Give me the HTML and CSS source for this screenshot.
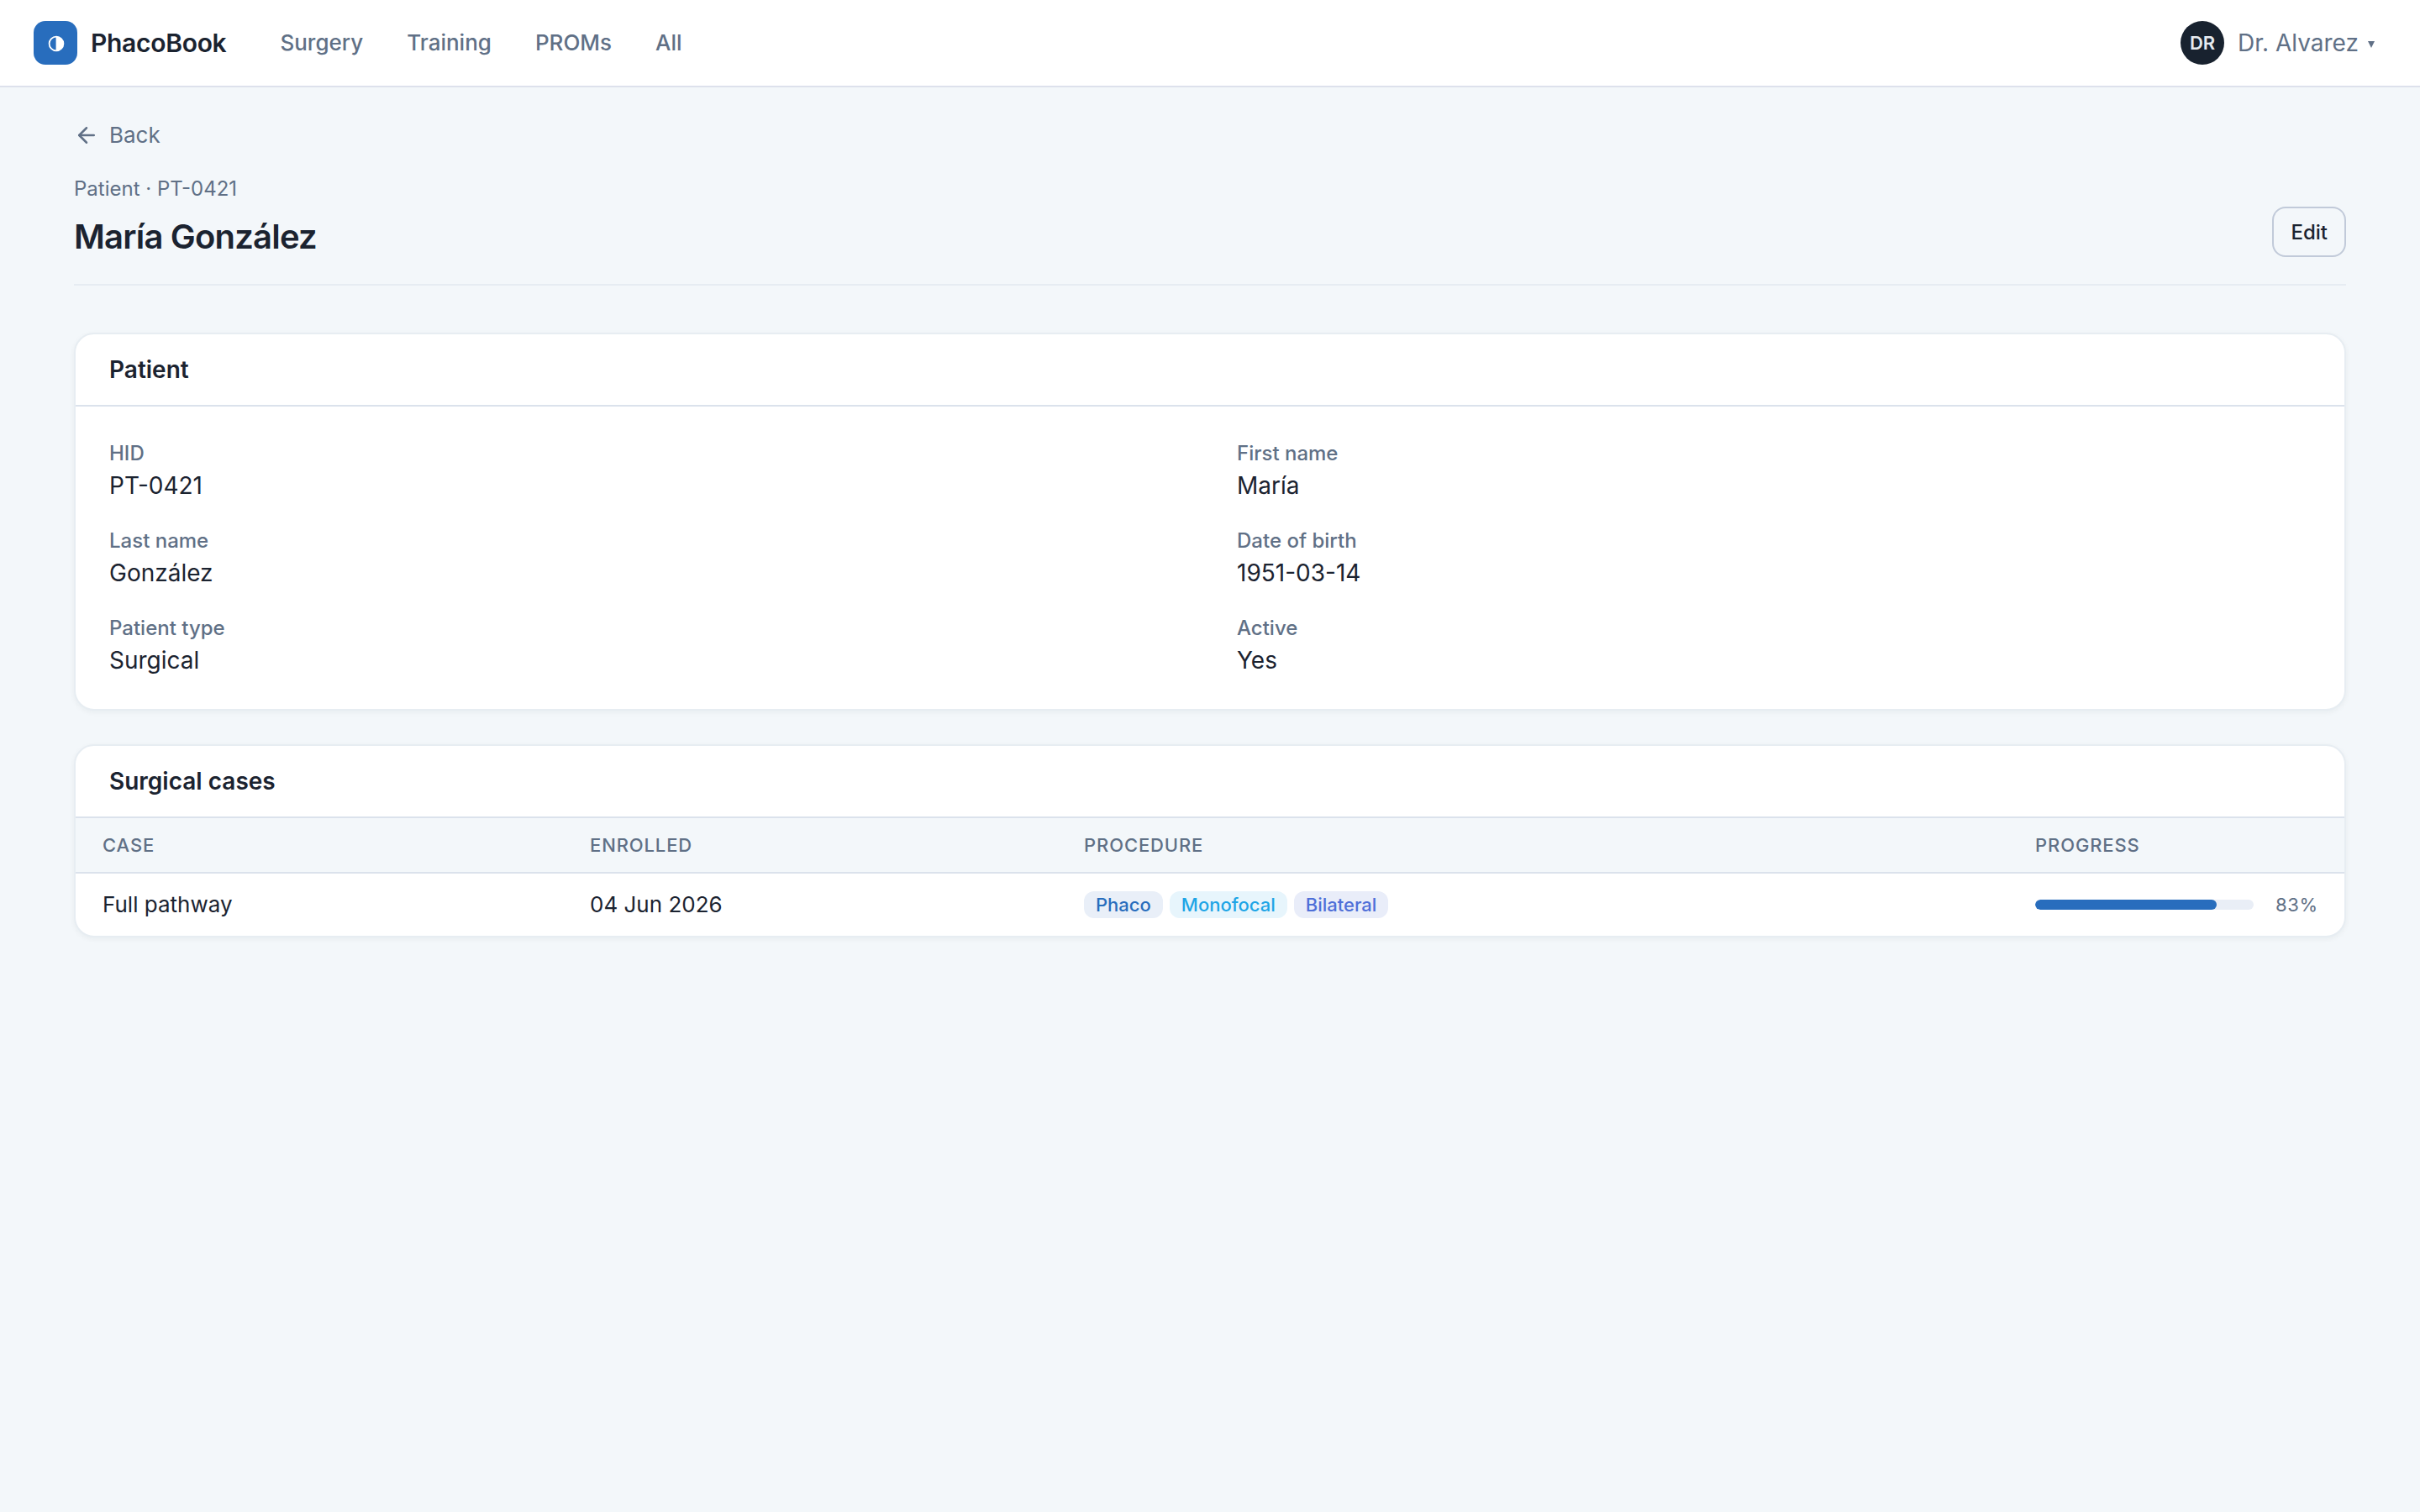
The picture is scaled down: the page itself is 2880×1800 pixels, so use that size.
FILE: index.html
```html
<!DOCTYPE html>
<html lang="en">
<head>
  <meta charset="UTF-8" />
  <title>PhacoBook - María González</title>
  <meta name="viewport" content="width=device-width, initial-scale=1.0" />
  <link rel="stylesheet" href="styles.css">
</head>
<body>
  <header class="topbar">
    <a class="brand" href="#">
      <span class="brand-mark">
        <svg viewBox="0 0 20 20" width="20" height="20">
          <circle cx="10" cy="10" r="8.4" fill="none" stroke="#fff" stroke-width="1.8" />
          <path d="M9.6 1.6H10a8.4 8.4 0 0 1 0 16.8h-.4z" fill="#fff" />
        </svg>
      </span>
      <span class="brand-name">PhacoBook</span>
    </a>
    <nav class="nav">
      <a href="#">Surgery</a>
      <a href="#">Training</a>
      <a href="#">PROMs</a>
      <a href="#">All</a>
    </nav>
    <div class="user">
      <span class="avatar">DR</span>
      <span class="user-name">Dr. Alvarez</span>
      <svg class="caret" viewBox="0 0 8 8" width="8" height="8"><path d="M0 0h8L4 8z" fill="currentColor" /></svg>
    </div>
  </header>

  <main class="page">
    <a class="back" href="#">
      <svg viewBox="0 0 24 24" width="30" height="30" fill="none" stroke="currentColor" stroke-width="2" stroke-linecap="round" stroke-linejoin="round">
        <path d="M19 12H5" />
        <path d="M12 19l-7-7 7-7" />
      </svg>
      <span>Back</span>
    </a>

    <div class="page-head">
      <div>
        <p class="eyebrow">Patient · PT-0421</p>
        <h1>María González</h1>
      </div>
      <button class="btn">Edit</button>
    </div>

    <section class="card">
      <h2>Patient</h2>
      <dl class="details">
        <div><dt>HID</dt><dd>PT-0421</dd></div>
        <div><dt>First name</dt><dd>María</dd></div>
        <div><dt>Last name</dt><dd>González</dd></div>
        <div><dt>Date of birth</dt><dd>1951-03-14</dd></div>
        <div><dt>Patient type</dt><dd>Surgical</dd></div>
        <div><dt>Active</dt><dd>Yes</dd></div>
      </dl>
    </section>

    <section class="card">
      <h2>Surgical cases</h2>
      <table class="cases">
        <thead>
          <tr>
            <th class="col-case">Case</th>
            <th class="col-enrolled">Enrolled</th>
            <th>Procedure</th>
            <th class="col-progress">Progress</th>
          </tr>
        </thead>
        <tbody>
          <tr>
            <td>Full pathway</td>
            <td>04 Jun 2026</td>
            <td>
              <div class="tags">
                <span class="tag tag-phaco">Phaco</span>
                <span class="tag tag-mono">Monofocal</span>
                <span class="tag tag-bilateral">Bilateral</span>
              </div>
            </td>
            <td>
              <div class="progress">
                <div class="track"><div class="fill" style="width: 83%"></div></div>
                <span class="percent">83%</span>
              </div>
            </td>
          </tr>
        </tbody>
      </table>
    </section>
  </main>
</body>
</html>
```
FILE: styles.css
```css
* {
  box-sizing: border-box;
}
body {
  margin: 0;
  font-family: Inter, "Liberation Sans", sans-serif;
  font-size: 28px;
  color: #1b2330;
  background: #f3f7fa;
}
a {
  color: inherit;
  text-decoration: none;
}
h1, h2, p, dl, dd {
  margin: 0;
}

/* Top bar */
.topbar {
  display: flex;
  align-items: center;
  height: 104px;
  padding: 0 54px 0 40px;
  background: #fff;
  border-bottom: 2px solid #dde1ec;
}
.brand {
  display: flex;
  align-items: center;
  gap: 16px;
}
.brand-mark {
  display: flex;
  align-items: center;
  justify-content: center;
  width: 52px;
  height: 52px;
  padding: 2px 0 0 1px;
  border-radius: 14px;
  background: #286dbd;
}
.brand-name {
  font-size: 30px;
  font-weight: 600;
  letter-spacing: -0.01em;
}
.nav {
  display: flex;
  gap: 52px;
  margin-left: 64px;
  padding-bottom: 1px;
  font-size: 26px;
  font-weight: 500;
  line-height: 32px;
  color: #607086;
}
.user {
  display: flex;
  align-items: center;
  margin-left: auto;
  color: #607086;
}
.avatar {
  display: flex;
  align-items: center;
  justify-content: center;
  width: 52px;
  height: 52px;
  margin-right: 16px;
  border-radius: 50%;
  background: #18222f;
  color: #e6ebf0;
  font-size: 22px;
  font-weight: 600;
}
.caret {
  margin: 4px 0 0 11px;
}

/* Page head */
.page {
  padding: 40px 88px;
}
.back {
  display: flex;
  align-items: center;
  gap: 12px;
  height: 34px;
  font-size: 26px;
  line-height: 32px;
  color: #607086;
}
.page-head {
  display: flex;
  align-items: flex-end;
  justify-content: space-between;
  height: 162px;
  margin-bottom: 56px;
  padding-bottom: 32px;
  border-bottom: 2px solid #e6ecf2;
}
.eyebrow {
  margin-bottom: 15px;
  font-size: 24px;
  line-height: 36px;
  color: #607086;
}
h1 {
  font-size: 40px;
  font-weight: 600;
  line-height: 48px;
  letter-spacing: -0.02em;
}
.btn {
  height: 60px;
  padding: 0 20px;
  border: 2px solid #c1cad9;
  border-radius: 16px;
  background: transparent;
  color: #1b2330;
  font: 500 24px Inter, "Liberation Sans", sans-serif;
}

/* Cards */
.card {
  margin-bottom: 40px;
  border: 2px solid #e7edf2;
  border-radius: 24px;
  background: #fff;
  box-shadow: 0 2px 6px rgba(24, 34, 47, 0.05);
  overflow: hidden;
}
.card h2 {
  height: 86px;
  padding: 0 40px;
  border-bottom: 2px solid #dbe2ec;
  font-size: 28px;
  font-weight: 600;
  line-height: 84px;
}
.details {
  display: grid;
  grid-template-columns: 1fr 1fr;
  gap: 28px 64px;
  padding: 38px 40px 38px;
}
dt {
  font-size: 24px;
  font-weight: 500;
  line-height: 36px;
  color: #607086;
}
dd {
  line-height: 40px;
}

/* Cases table */
.cases {
  width: 100%;
  table-layout: fixed;
  border-collapse: separate;
  border-spacing: 0;
}
.col-case {
  width: 580px;
}
.col-enrolled {
  width: 588px;
}
.col-progress {
  width: 400px;
}
th {
  height: 66px;
  padding: 0 32px;
  border-bottom: 2px solid #dbe2ec;
  background: #f3f7fa;
  font-size: 22px;
  font-weight: 500;
  letter-spacing: 0.04em;
  text-align: left;
  text-transform: uppercase;
  color: #607086;
}
td {
  height: 74px;
  padding: 0 32px;
  font-size: 26px;
  line-height: 32px;
}
.tags {
  display: flex;
  gap: 8px;
}
.tag {
  height: 32px;
  padding: 0 14px;
  border-radius: 12px;
  font-size: 22px;
  font-weight: 500;
  line-height: 32px;
}
.tag-phaco {
  background: #e9eff8;
  color: #286dbd;
}
.tag-mono {
  background: #e7f5fc;
  color: #1ea5e6;
}
.tag-bilateral {
  background: #e9edf9;
  color: #4f6fd8;
}
.progress {
  display: flex;
  align-items: center;
  justify-content: space-between;
}
.track {
  width: 260px;
  height: 12px;
  border-radius: 6px;
  background: #e9eef6;
  overflow: hidden;
}
.fill {
  height: 100%;
  border-radius: 6px;
  background: #286dbd;
}
.percent {
  font-size: 22px;
  font-variant-numeric: tabular-nums;
  color: #607086;
}
```
